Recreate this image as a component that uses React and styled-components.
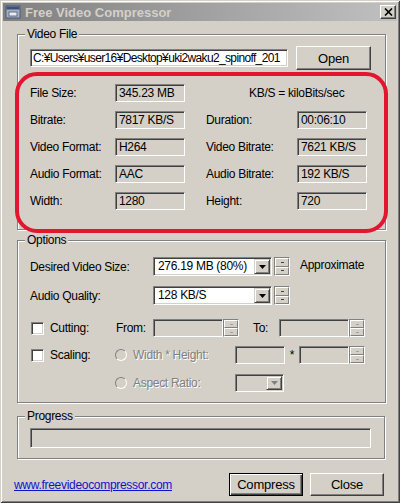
import React from "react";
import { styled, createGlobalStyle } from "styled-components";

const Global = createGlobalStyle`
  html, body {
    margin: 0;
    padding: 0;
    background: #d4d0c8;
  }
  body {
    font-family: "Liberation Sans", Arial, sans-serif;
    font-size: 12px;
    letter-spacing: -0.3px;
    color: #000;
  }
`;

const Window = styled.div`
  position: relative;
  width: 400px;
  height: 503px;
  box-sizing: border-box;
  padding: 3px;
  background: #d4d0c8;
  overflow: hidden;
  box-shadow: inset 1px 1px 0 #d4d0c8, inset -1px -1px 0 #404040,
    inset 2px 2px 0 #fff, inset -2px -2px 0 #808080;
`;

const TitleBar = styled.div`
  height: 18px;
  display: flex;
  align-items: center;
  padding: 0 1px 0 2px;
  background: linear-gradient(90deg, #808080 0%, #c0c0c0 100%);
`;

const TitleText = styled.span`
  margin-left: 4px;
  font-size: 13px;
  font-weight: bold;
  letter-spacing: 0;
  color: #d4d0c8;
`;

const CloseBtn = styled.div`
  margin-left: auto;
  width: 16px;
  height: 14px;
  box-sizing: border-box;
  background: #d4d0c8;
  border: 1px solid;
  border-color: #fff #404040 #404040 #fff;
  box-shadow: inset -1px -1px 0 #808080;
  display: flex;
  align-items: center;
  justify-content: center;
`;

const Body = styled.div`
  padding: 0 11px 0 14px;
`;

const Group = styled.div`
  position: relative;
  margin-top: ${(p) => p.$mt}px;
  padding: ${(p) => p.$pt}px 12px ${(p) => p.$pb}px;
  border: 1px solid #808080;
  box-shadow: 1px 1px 0 #fff, inset 1px 1px 0 #fff;
  width: ${(p) => p.$w || 369}px;
  box-sizing: border-box;
`;

const Legend = styled.span`
  position: absolute;
  top: -8px;
  left: 7px;
  padding: 0 2px;
  line-height: 14px;
  background: #d4d0c8;
`;

const Row = styled.div`
  display: flex;
  align-items: center;
  height: ${(p) => p.$h || 18}px;
  margin-top: ${(p) => p.$mt || 0}px;
`;

const Cell = styled.div`
  flex: none;
  width: ${(p) => p.$w}px;
  white-space: nowrap;
  color: ${(p) => (p.$off ? "#808080" : "#000")};
  text-shadow: ${(p) => (p.$off ? "1px 1px 0 #fff" : "none")};
  text-align: ${(p) => p.$align || "left"};
`;

const sunken = `
  box-sizing: border-box;
  border: 1px solid;
  border-color: #808080 #fff #fff #808080;
  box-shadow: inset 1px 1px 0 #404040, inset -1px -1px 0 #d4d0c8;
`;

const PathInput = styled.div`
  ${sunken}
  width: 258px;
  height: 18px;
  background: #fff;
  padding-left: 2px;
  line-height: 16px;
  letter-spacing: -0.65px;
  white-space: nowrap;
  overflow: hidden;
`;

const Button = styled.div`
  flex: none;
  width: ${(p) => p.$w}px;
  height: ${(p) => p.$h}px;
  margin-left: ${(p) => p.$ml || 0}px;
  box-sizing: border-box;
  display: flex;
  align-items: center;
  justify-content: center;
  background: #d4d0c8;
  font-size: 13px;
  letter-spacing: -0.2px;
  border: 1px solid;
  border-color: ${(p) => (p.$default ? "#000" : "#fff #404040 #404040 #fff")};
  box-shadow: ${(p) =>
    p.$default
      ? "inset 1px 1px 0 #fff, inset -1px -1px 0 #404040, inset -2px -2px 0 #808080"
      : "inset -1px -1px 0 #808080"};
`;

const InfoGrid = styled.div`
  margin-top: 14px;
  display: grid;
  grid-template-columns: 85px 70px 21px 91px 70px;
  grid-auto-rows: 18px;
  row-gap: 9px;
  align-items: center;
`;

const Note = styled.div`
  grid-column: 3 / 6;
  padding-left: 64px;
  white-space: nowrap;
`;

const Field = styled.div`
  ${sunken}
  flex: none;
  width: ${(p) => p.$w || 70}px;
  height: 18px;
  line-height: 16px;
  padding-left: 3px;
  background: ${(p) => (p.$white ? "#fff" : "#d4d0c8")};
  white-space: nowrap;
  position: relative;
`;

const Combo = styled(Field)`
  height: ${(p) => p.$h || 19}px;
  line-height: ${(p) => (p.$h || 19) - 2}px;
  padding-left: 4px;
  display: flex;
`;

const DropBtn = styled.div`
  margin-left: auto;
  width: 16px;
  height: calc(100% - 2px);
  margin-top: 1px;
  margin-right: 1px;
  box-sizing: border-box;
  background: #d4d0c8;
  border: 1px solid;
  border-color: #d4d0c8 #404040 #404040 #d4d0c8;
  box-shadow: inset 1px 1px 0 #fff, inset -1px -1px 0 #808080;
  display: flex;
  align-items: center;
  justify-content: center;
`;

const Spin = styled.div`
  flex: none;
  width: 16px;
  height: ${(p) => p.$h || 18}px;
  margin-left: ${(p) => p.$ml || 0}px;
  display: flex;
  flex-direction: column;
  box-sizing: border-box;
  border: 1px solid;
  border-color: #808080 #fff #fff #808080;
`;

const SpinHalf = styled.div`
  flex: 1;
  box-sizing: border-box;
  background: #d4d0c8;
  border: 1px solid;
  border-color: #fff #808080 #808080 #fff;
  display: flex;
  align-items: center;
  justify-content: center;
  &::after {
    content: "";
    width: 3px;
    height: 1px;
    background: ${(p) => (p.$off ? "#a0a0a0" : "#404040")};
  }
`;

const Check = styled.div`
  flex: none;
  width: 13px;
  height: 13px;
  margin: 0 6px 0 1px;
  ${sunken}
  background: #fff;
`;

const Radio = styled.div`
  flex: none;
  width: 12px;
  height: 12px;
  margin-right: 6px;
  box-sizing: border-box;
  border-radius: 50%;
  border: 1px solid;
  border-color: #808080 #fff #fff #808080;
  background: #d4d0c8;
`;

const Progress = styled.div`
  ${sunken}
  width: 341px;
  height: 20px;
  background: #d4d0c8;
`;

const Footer = styled.div`
  display: flex;
  align-items: center;
  margin: 14px 2px 0 -3px;
`;

const Link = styled.a`
  color: #1010d0;
  text-decoration: underline;
  font-size: 12px;
  margin-right: auto;
`;

const Marker = styled.div`
  position: absolute;
  left: 15px;
  top: 72px;
  width: 373px;
  height: 161px;
  box-sizing: border-box;
  border: 4px solid #e2162e;
  border-radius: 22px;
  pointer-events: none;
`;

const Arrow = ({ off }) => (
  <svg width="7" height="4" viewBox="0 0 7 4">
    <path d="M0 0h7L3.5 4z" fill={off ? "#808080" : "#000"} />
  </svg>
);

const Spinner = ({ off, h, ml }) => (
  <Spin $h={h} $ml={ml}>
    <SpinHalf $off={off} />
    <SpinHalf $off={off} />
  </Spin>
);

const info = [
  ["Bitrate:", "7817 KB/S", "Duration:", "00:06:10"],
  ["Video Format:", "H264", "Video Bitrate:", "7621 KB/S"],
  ["Audio Format:", "AAC", "Audio Bitrate:", "192 KB/S"],
  ["Width:", "1280", "Height:", "720"],
];

export default function App() {
  return (
    <Window>
      <Global />
      <TitleBar>
        <svg width="16" height="14" viewBox="0 0 16 14">
          <rect x="1" y="1" width="14" height="12" fill="#a8b0c0" stroke="#4a5a78" />
          <rect x="1.5" y="1.5" width="13" height="3" fill="#3c5080" />
          <rect x="4" y="7" width="8" height="4" fill="#e8ecf4" stroke="#4a5a78" strokeWidth="0.8" />
        </svg>
        <TitleText>Free Video Compressor</TitleText>
        <CloseBtn>
          <svg width="9" height="8" viewBox="0 0 9 8">
            <path d="M1 0.5L8 7.5M8 0.5L1 7.5" stroke="#000" strokeWidth="1.6" />
          </svg>
        </CloseBtn>
      </TitleBar>
      <Body>
        <Group $mt={13} $pt={11} $pb={19}>
          <Legend>Video File</Legend>
          <Row $h={24}>
            <PathInput>C:¥Users¥user16¥Desktop¥uki2waku2_spinoff_201</PathInput>
            <Button $w={75} $h={24} $ml={8}>
              Open
            </Button>
          </Row>
          <InfoGrid>
            <Cell>File Size:</Cell>
            <Field>345.23 MB</Field>
            <Note>KB/S = kiloBits/sec</Note>
            {info.map((r) => (
              <React.Fragment key={r[0]}>
                <Cell>{r[0]}</Cell>
                <Field>{r[1]}</Field>
                <span />
                <Cell>{r[2]}</Cell>
                <Field>{r[3]}</Field>
              </React.Fragment>
            ))}
          </InfoGrid>
        </Group>

        <Group $mt={10} $pt={16} $pb={10}>
          <Legend>Options</Legend>
          <Row $h={19}>
            <Cell $w={123}>Desired Video Size:</Cell>
            <Combo $w={119} $white>
              276.19 MB (80%)
              <DropBtn>
                <Arrow />
              </DropBtn>
            </Combo>
            <Spinner h={19} ml={2} />
            <Cell $w={80} style={{ marginLeft: 10, marginTop: -3 }}>
              Approximate
            </Cell>
          </Row>
          <Row $h={19} $mt={10}>
            <Cell $w={123}>Audio Quality:</Cell>
            <Combo $w={119} $white>
              128 KB/S
              <DropBtn>
                <Arrow />
              </DropBtn>
            </Combo>
            <Spinner h={19} ml={2} />
          </Row>
          <Row $mt={14}>
            <Check />
            <Cell $w={66}>Cutting:</Cell>
            <Cell $w={37}>From:</Cell>
            <Field $w={70} />
            <Spinner off />
            <Cell $w={26} style={{ marginLeft: 14 }}>
              To:
            </Cell>
            <Field $w={70} />
            <Spinner off />
          </Row>
          <Row $mt={9}>
            <Check />
            <Cell $w={65}>Scaling:</Cell>
            <Radio />
            <Cell $w={102} $off>
              Width * Height:
            </Cell>
            <Field $w={50} />
            <Cell $w={14} $align="center">
              *
            </Cell>
            <Field $w={50} />
            <Spinner off />
          </Row>
          <Row $mt={10}>
            <Cell $w={85} />
            <Radio />
            <Cell $w={102} $off>
              Aspect Ratio:
            </Cell>
            <Combo $w={49} $h={18}>
              <DropBtn>
                <Arrow off />
              </DropBtn>
            </Combo>
          </Row>
        </Group>

        <Group $mt={13} $pt={11} $pb={10} $w={368}>
          <Legend>Progress</Legend>
          <Progress />
        </Group>

        <Footer>
          <Link href="#">www.freevideocompressor.com</Link>
          <Button $w={74} $h={23} $default>
            Compress
          </Button>
          <Button $w={74} $h={23} $ml={7}>
            Close
          </Button>
        </Footer>
      </Body>
      <Marker />
    </Window>
  );
}
